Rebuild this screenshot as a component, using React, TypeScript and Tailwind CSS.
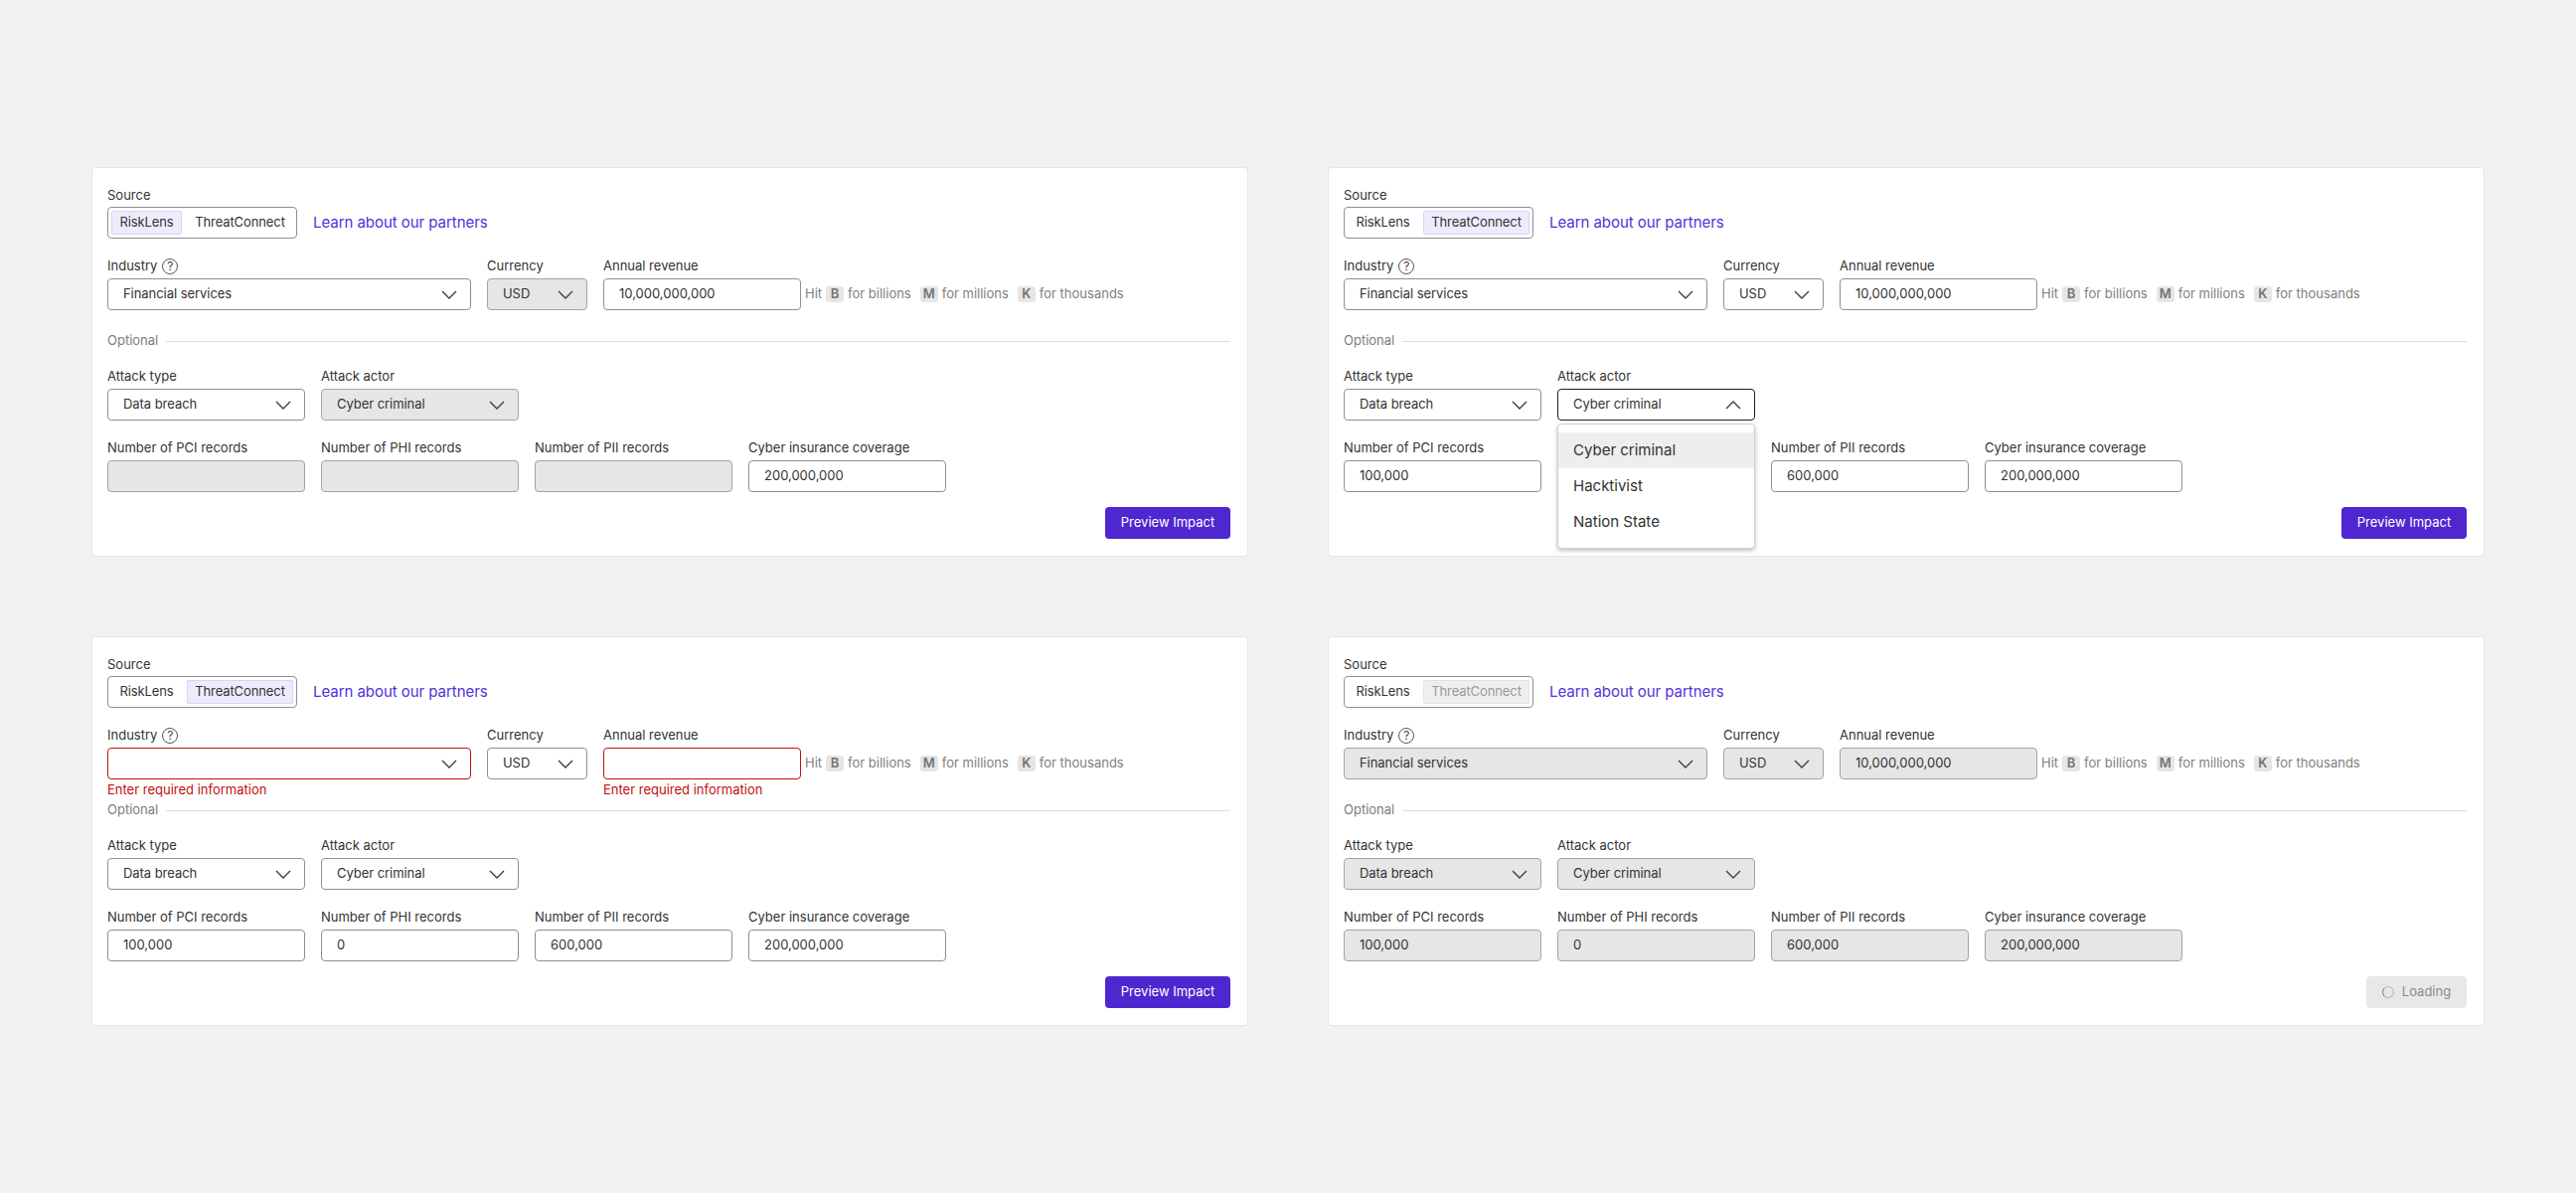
import React from 'react';

function Chevron({ up = false }: { up?: boolean }) {
  return (
    <svg width="16" height="9" viewBox="0 0 16 9" fill="none" className={up ? 'rotate-180' : ''}>
      <path d="M1 1l7 7 7-7" stroke="#3d3d3d" strokeWidth="1.4" />
    </svg>
  );
}

interface BoxProps {
  label?: React.ReactNode;
  value?: string;
  width: string;
  disabled?: boolean;
  error?: boolean;
  focused?: boolean;
}

function boxClass({ disabled, error, focused }: BoxProps) {
  let cls = 'border-[#8f8f8f] bg-white';
  if (disabled) cls = 'border-[#a3a3a3] bg-[#e6e6e6]';
  if (error) cls = 'border-[#c20e0e] bg-white';
  if (focused) cls = 'border-[#1f1f1f] bg-white';
  return `flex h-8 items-center rounded-[4px] border text-[#333333] ${cls}`;
}

function Label({ children }: { children: React.ReactNode }) {
  return <div className="flex h-5 items-center gap-[5px] text-[13px] text-[#333333]">{children}</div>;
}

function SelectBox(props: BoxProps) {
  const { label, value, width, focused } = props;
  return (
    <div className={width}>
      <Label>{label}</Label>
      <div className={`mt-[2px] justify-between pl-[15px] pr-[13px] ${boxClass(props)}`}>
        <span className="tracking-[-0.05px]">{value}</span>
        <Chevron up={focused} />
      </div>
    </div>
  );
}

function InputBox(props: BoxProps) {
  const { label, value, width } = props;
  return (
    <div className={width}>
      <Label>{label}</Label>
      <div className={`mt-[2px] pl-[15px] ${boxClass(props)}`}>{value}</div>
    </div>
  );
}

function Key({ children }: { children: string }) {
  return (
    <span className="mx-[4px] flex h-4 w-[18px] items-center justify-center rounded-[3px] bg-[#e6e6e6] text-[13px] font-semibold text-[#737373]">
      {children}
    </span>
  );
}

function HelpIcon() {
  return (
    <span className="flex h-4 w-4 items-center justify-center rounded-full border border-[#555555] text-[12px] text-[#444444]">
      ?
    </span>
  );
}

function Segment({ active, dimmed }: { active: 'RiskLens' | 'ThreatConnect'; dimmed?: boolean }) {
  const pill = (name: string, w: string) => {
    let cls = 'border-transparent text-[#333333]';
    if (name === active) cls = dimmed ? 'border-[#e2e2e2] bg-[#efefef] text-[#9a9a9a]' : 'border-[#d9d2f8] bg-[#eeebfd] text-[#333333]';
    return (
      <div className={`flex h-6 items-center justify-center rounded-[2px] border tracking-[-0.1px] ${w} ${cls}`}>{name}</div>
    );
  };
  return (
    <div className="flex h-8 w-[191px] items-center gap-[5px] rounded-[4px] border border-[#8f8f8f] px-[3px]">
      {pill('RiskLens', 'w-[71px]')}
      {pill('ThreatConnect', 'w-[107px]')}
    </div>
  );
}

interface CardProps {
  source: 'RiskLens' | 'ThreatConnect';
  sourceDimmed?: boolean;
  industry?: string;
  revenue?: string;
  errors?: boolean;
  currencyDisabled?: boolean;
  actorDisabled?: boolean;
  actorOpen?: boolean;
  allDisabled?: boolean;
  records: [string, string, string];
  recordsDisabled?: boolean;
  loading?: boolean;
}

function Card(c: CardProps) {
  return (
    <div className="h-[392px] rounded-[4px] border border-[#e4e4e4] bg-white px-[15px] pt-[18px] text-[13px]">
      <Label>Source</Label>
      <div className="mt-[1px] flex items-center gap-4">
        <Segment active={c.source} dimmed={c.sourceDimmed} />
        <a className="text-[15px] tracking-[-0.05px] text-[#5230dc]">Learn about our partners</a>
      </div>

      <div className="mt-[18px] flex gap-4">
        <SelectBox
          width="w-[366px]"
          value={c.industry}
          error={c.errors}
          disabled={c.allDisabled}
          label={
            <>
              Industry <HelpIcon />
            </>
          }
        />
        <SelectBox width="w-[101px]" label="Currency" value="USD" disabled={c.currencyDisabled || c.allDisabled} />
        <div className="flex items-end">
          <InputBox width="w-[199px]" label="Annual revenue" value={c.revenue} error={c.errors} disabled={c.allDisabled} />
          <div className="ml-1 flex h-8 items-center text-[13px] text-[#808080]">
            Hit <Key>B</Key> for billions <span className="w-[5px]" /> <Key>M</Key> for millions <span className="w-[5px]" />{' '}
            <Key>K</Key> for thousands
          </div>
        </div>
      </div>

      {c.errors ? (
        <div className="flex h-5 gap-4 pt-[1px] text-[13px] text-[#c20e0e]">
          <div className="w-[366px]">Enter required information</div>
          <div className="w-[101px]" />
          <div>Enter required information</div>
        </div>
      ) : (
        <div className="h-5" />
      )}

      <div className="mt-[1px] flex h-5 items-center gap-[8px] pr-[2px] text-[#7d7d7d]">
        Optional
        <div className="h-px flex-1 bg-[#dcdcdc]" />
      </div>

      <div className="mt-4 flex gap-4">
        <SelectBox width="w-[199px]" label="Attack type" value="Data breach" disabled={c.allDisabled} />
        <div className="relative">
          <SelectBox
            width="w-[199px]"
            label="Attack actor"
            value="Cyber criminal"
            disabled={c.actorDisabled || c.allDisabled}
            focused={c.actorOpen}
          />
          {c.actorOpen && (
            <div className="absolute left-0 top-[57px] z-10 w-[199px] rounded-[4px] border border-[#cfcfcf] bg-white py-2 text-[15px] text-[#333333] shadow-[0_2px_4px_rgba(0,0,0,0.25)]">
              <div className="flex h-9 items-center bg-[#eeeeee] pl-[15px]">Cyber criminal</div>
              <div className="flex h-9 items-center pl-[15px]">Hacktivist</div>
              <div className="flex h-9 items-center pl-[15px]">Nation State</div>
            </div>
          )}
        </div>
      </div>

      <div className="mt-[18px] flex gap-4">
        <InputBox width="w-[199px]" label="Number of PCI records" value={c.records[0]} disabled={c.recordsDisabled || c.allDisabled} />
        {/* the open menu covers this field in the second card */}
        <InputBox width="w-[199px]" label={c.actorOpen ? '' : 'Number of PHI records'} value={c.records[1]} disabled={c.recordsDisabled || c.allDisabled} />
        <InputBox width="w-[199px]" label="Number of PII records" value={c.records[2]} disabled={c.recordsDisabled || c.allDisabled} />
        <InputBox width="w-[199px]" label="Cyber insurance coverage" value="200,000,000" disabled={c.allDisabled} />
      </div>

      <div className="mt-[15px] flex justify-end pr-[2px]">
        {c.loading ? (
          <div className="flex h-8 w-[101px] items-center justify-center gap-2 rounded-[4px] bg-[#e8e8e8] text-[#8c8c8c]">
            <span className="h-3 w-3 rounded-full border-[1.5px] border-[#b5b5b5] border-l-[#777777]" />
            Loading
          </div>
        ) : (
          <button className="h-8 w-[126px] rounded-[4px] bg-[#4f27d1] text-[13px] text-white">Preview Impact</button>
        )}
      </div>
    </div>
  );
}

export default function App() {
  return (
    <div className="min-h-[1200px] w-[2592px] bg-[#f1f1f1] pl-[92px] pt-[168px] font-['Inter',sans-serif] text-[13px]">
      <div className="grid w-[2408px] grid-cols-[1164px_1164px] gap-x-[80px] gap-y-[80px]">
        <Card
          source="RiskLens"
          industry="Financial services"
          revenue="10,000,000,000"
          currencyDisabled
          actorDisabled
          records={['', '', '']}
          recordsDisabled
        />
        <Card
          source="ThreatConnect"
          industry="Financial services"
          revenue="10,000,000,000"
          actorOpen
          records={['100,000', '', '600,000']}
        />
        <Card source="ThreatConnect" errors records={['100,000', '0', '600,000']} />
        <Card
          source="ThreatConnect"
          sourceDimmed
          industry="Financial services"
          revenue="10,000,000,000"
          allDisabled
          loading
          records={['100,000', '0', '600,000']}
        />
      </div>
    </div>
  );
}
